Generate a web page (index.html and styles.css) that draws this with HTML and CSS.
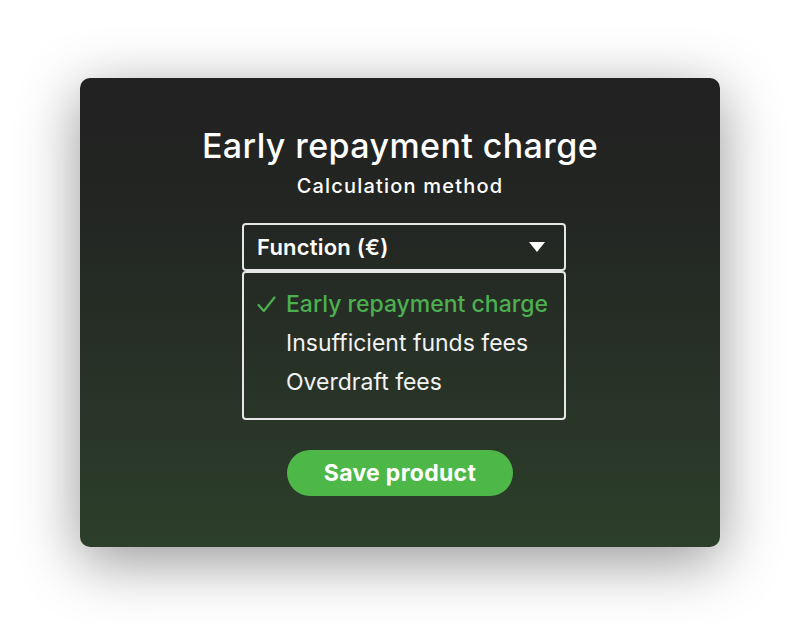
FILE: index.html
```html
<!DOCTYPE html>
<html lang="en">
<head>
<meta charset="utf-8">
<title>Early repayment charge</title>
<link rel="stylesheet" href="styles.css">
</head>
<body>
<main class="card">
  <h1 class="title">Early repayment charge</h1>
  <p class="subtitle">Calculation method</p>
  <div class="field">
    <div class="select">
      <span class="select-value">Function (€)</span>
      <svg class="caret" width="18" height="12" viewBox="0 0 18 12" aria-hidden="true"><path d="M1 1 H17 L9 11 Z" fill="#fff"/></svg>
    </div>
    <ul class="menu">
      <li class="option selected"><span class="mark"><svg width="19" height="17" viewBox="0 0 19 17" aria-hidden="true"><path d="M1.5 9 L6.8 15 L17.5 1.5" fill="none" stroke="#4caf50" stroke-width="2.2" stroke-linecap="round" stroke-linejoin="round"/></svg></span>Early repayment charge</li>
      <li class="option"><span class="mark"></span>Insufficient funds fees</li>
      <li class="option"><span class="mark"></span>Overdraft fees</li>
    </ul>
  </div>
  <button class="save" type="button">Save product</button>
</main>
</body>
</html>
```
FILE: styles.css
```css
html, body {
  margin: 0;
  padding: 0;
}
body {
  width: 800px;
  height: 624px;
  background: #ffffff;
  display: flex;
  align-items: center;
  justify-content: center;
  font-family: "Inter", "Noto Sans", sans-serif;
  color: #ffffff;
}
.card {
  box-sizing: border-box;
  width: 640px;
  height: 469px;
  border-radius: 10px;
  background: linear-gradient(180deg, #212121 0%, #232623 30%, #2c3f2a 100%);
  box-shadow: 0 14px 60px rgba(0, 0, 0, 0.42);
  display: flex;
  flex-direction: column;
  align-items: center;
  padding-top: 48px;
}
.title {
  margin: 0;
  font-size: 34px;
  line-height: 40px;
  font-weight: 500;
  letter-spacing: 0.4px;
}
.subtitle {
  margin: 8px 0 0;
  font-size: 20px;
  line-height: 24px;
  font-weight: 500;
  letter-spacing: 1.2px;
}
.field {
  margin: 25px 0 0 8px;
  width: 324px;
}
.select {
  box-sizing: border-box;
  height: 48px;
  border: 2px solid #e6e6e6;
  border-radius: 4px;
  display: flex;
  align-items: center;
  justify-content: space-between;
  padding: 0 18px 0 13px;
}
.select-value {
  font-size: 22px;
  font-weight: 600;
  line-height: 24px;
  letter-spacing: 0.2px;
}
.caret {
  display: block;
}
.menu {
  box-sizing: border-box;
  list-style: none;
  margin: 0;
  height: 149px;
  border: 2px solid #e6e6e6;
  border-radius: 4px;
  padding: 12px 0 0 13px;
}
.option {
  display: flex;
  align-items: center;
  font-size: 23px;
  line-height: 39px;
  font-weight: 400;
  color: #f2f2f2;
}
.option.selected {
  color: #4caf50;
  font-weight: 500;
}
.mark {
  width: 29px;
  flex: none;
  display: flex;
  align-items: center;
}
.save {
  margin-top: 30px;
  width: 226px;
  height: 46px;
  border: none;
  border-radius: 23px;
  background: #4db748;
  color: #ffffff;
  font-family: "Inter", "Noto Sans", sans-serif;
  font-size: 23px;
  font-weight: 700;
  letter-spacing: 0.3px;
  cursor: pointer;
}
```
